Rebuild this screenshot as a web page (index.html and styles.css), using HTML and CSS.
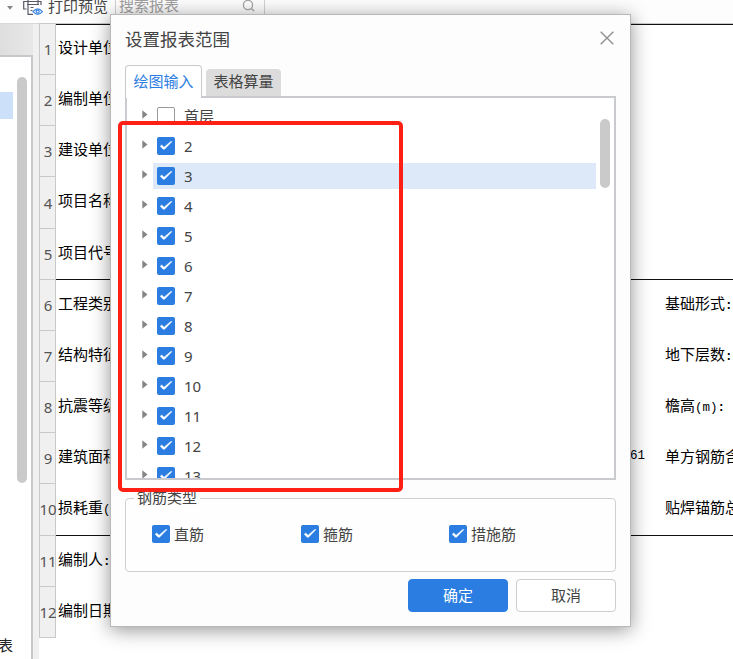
FILE: index.html
```html
<!DOCTYPE html>
<html lang="zh-CN">
<head>
<meta charset="utf-8">
<title>设置报表范围</title>
<link rel="stylesheet" href="styles.css">
</head>
<body>
<svg class="defs" aria-hidden="true">
  <symbol id="check" viewBox="0 0 18 18"><rect width="18" height="18" rx="2" fill="#2b7de1"/><path d="M3.200 9.300 6.200 12.200 7.500 12.200 15 4.500 13.500 4.700 7.100 10.200 4.700 8z" fill="#fff" stroke="#fff" stroke-width=".5"/></symbol>
  <symbol id="arrow" viewBox="0 0 6 9"><path d="M.3.2 5.5 4.5.3 8.8z" fill="#858585"/></symbol>
</svg>
<div class="app">
  <header class="toolbar">
    <svg class="caret" viewBox="0 0 6 4"><path d="M0 0h6L3 3.7z" fill="#858585"/></svg>
    <svg class="printer" viewBox="0 0 20 20" fill="none" stroke="#565b66" stroke-width="1.200"><path d="M5 7V0M15 0v7M3.500 12H.700V4.500H18V8M4 7.500h12M5 7.500V17.300h5M7.500 10.500h3M7.500 13.500h2"/><path d="M10 14.700q4.700-5.600 9.400 0-4.700 5.300-9.400 0z" stroke="#3b87e2" fill="#fff"/><circle cx="14.700" cy="14.600" r="1.500" stroke="#3b87e2"/></svg>
    <span class="preview">打印预览</span>
    <div class="search"><span>搜索报表</span><svg viewBox="0 0 14 14" fill="none" stroke="#a4a4a4" stroke-width="1.300"><circle cx="6" cy="6" r="4.600"/><path d="m9.500 9.500 2.700 2.700"/></svg></div>
  </header>
  <main class="workspace">
    <aside class="side">
      <div class="side-head"></div>
      <div class="side-body"><div class="side-list"><div class="side-selected"></div><span>表</span></div><div class="side-scroll"></div></div>
    </aside>
    <section class="sheet">
      <div class="row"><b>1</b><p>设计单位</p><p></p></div>
      <div class="row"><b>2</b><p>编制单位</p><p></p></div>
      <div class="row"><b>3</b><p>建设单位</p><p></p></div>
      <div class="row"><b>4</b><p>项目名称</p><p></p></div>
      <div class="row"><b>5</b><p>项目代号</p><p></p></div>
      <div class="row ruled"><b>6</b><p>工程类别</p><p>基础形式<i class="colon">:</i></p></div>
      <div class="row"><b>7</b><p>结构特征</p><p>地下层数<i class="colon">:</i></p></div>
      <div class="row"><b>8</b><p>抗震等级</p><p>檐高<i>(m)</i><i class="colon">:</i></p></div>
      <div class="row"><b>9</b><p>建筑面积<i class="area">61</i></p><p>单方钢筋含量</p></div>
      <div class="row"><b>10</b><p>损耗重<i>(</i></p><p>贴焊锚筋总重</p></div>
      <div class="row ruled"><b>11</b><p>编制人<i class="colon">:</i></p><p></p></div>
      <div class="row"><b>12</b><p>编制日期</p><p></p></div>
    </section>
  </main>
</div>

<div class="dialog" role="dialog">
  <div class="dialog-head"><h1>设置报表范围</h1><svg class="close" viewBox="0 0 14 14"><path d="m.7.700 12.600 12.600M13.300.700.700 13.300" stroke="#909090" stroke-width="1.400"/></svg></div>
  <div class="tabs"><div class="tab active">绘图输入</div><div class="tab">表格算量</div></div>
  <div class="tree">
    <div class="items">
      <div class="item"><svg class="arrow"><use href="#arrow"/></svg><div class="node"><span class="empty"></span>首层</div></div>
      <div class="item"><svg class="arrow"><use href="#arrow"/></svg><div class="node"><svg class="check"><use href="#check"/></svg>2</div></div>
      <div class="item"><svg class="arrow"><use href="#arrow"/></svg><div class="node selected"><svg class="check"><use href="#check"/></svg>3</div></div>
      <div class="item"><svg class="arrow"><use href="#arrow"/></svg><div class="node"><svg class="check"><use href="#check"/></svg>4</div></div>
      <div class="item"><svg class="arrow"><use href="#arrow"/></svg><div class="node"><svg class="check"><use href="#check"/></svg>5</div></div>
      <div class="item"><svg class="arrow"><use href="#arrow"/></svg><div class="node"><svg class="check"><use href="#check"/></svg>6</div></div>
      <div class="item"><svg class="arrow"><use href="#arrow"/></svg><div class="node"><svg class="check"><use href="#check"/></svg>7</div></div>
      <div class="item"><svg class="arrow"><use href="#arrow"/></svg><div class="node"><svg class="check"><use href="#check"/></svg>8</div></div>
      <div class="item"><svg class="arrow"><use href="#arrow"/></svg><div class="node"><svg class="check"><use href="#check"/></svg>9</div></div>
      <div class="item"><svg class="arrow"><use href="#arrow"/></svg><div class="node"><svg class="check"><use href="#check"/></svg>10</div></div>
      <div class="item"><svg class="arrow"><use href="#arrow"/></svg><div class="node"><svg class="check"><use href="#check"/></svg>11</div></div>
      <div class="item"><svg class="arrow"><use href="#arrow"/></svg><div class="node"><svg class="check"><use href="#check"/></svg>12</div></div>
      <div class="item"><svg class="arrow"><use href="#arrow"/></svg><div class="node"><svg class="check"><use href="#check"/></svg>13</div></div>
    </div>
    <div class="tree-scroll"></div>
  </div>
  <div class="group">
    <span class="legend">钢筋类型</span>
    <label><svg class="check"><use href="#check"/></svg>直筋</label>
    <label><svg class="check"><use href="#check"/></svg>箍筋</label>
    <label><svg class="check"><use href="#check"/></svg>措施筋</label>
  </div>
  <div class="actions"><button class="primary">确定</button><button>取消</button></div>
</div>
<div class="highlight"></div>
</body>
</html>
```
FILE: styles.css
```css
* { box-sizing: border-box; }
body {
  margin: 0;
  width: 733px;
  height: 659px;
  overflow: hidden;
  position: relative;
  background: #fff;
  color: #444;
  font: 15px/20px "Noto Sans", "Noto Sans CJK SC", sans-serif;
}
svg { display: block; flex: none; }
.defs { position: absolute; width: 0; height: 0; }

.app { height: 659px; display: flex; flex-direction: column; }
.toolbar { height: 23px; display: flex; align-items: flex-start; background: #fdfdfd; overflow: hidden; flex: none; }
.caret { width: 6px; height: 4px; margin: 6px 10px 0 7px; }
.printer { width: 20px; height: 20px; margin-top: -3px; }
.preview { margin: -4px 0 0 5px; width: 60px; }
.search { display: flex; width: 150px; height: 16px; margin-left: 7px; border: solid #d0d0d0; border-width: 0 1px; padding: 0 8px 0 3px; justify-content: space-between; color: #a0a0a0; }
.search span { margin-top: -5px; }
.search svg { width: 14px; height: 14px; margin-top: -1px; }

.workspace { display: flex; flex: 1; min-height: 0; }
.side { width: 39px; background: #f0f0f0; flex: none; border-top: 1px solid #d8d8d8; }
.side-head { height: 31px; width: 33px; background: linear-gradient(90deg, #dedede, #e8e8e8); }
.side-body { width: 33px; height: 604px; background: #fff; border: solid #c6c8cc; border-width: 2px 2px 0 0; display: flex; gap: 4px; }
.side-list { width: 13px; padding-top: 35px; display: flex; flex-direction: column; }
.side-selected { height: 27px; background: #cce0fa; margin-bottom: 516px; flex: none; }
.side-list span { margin-left: -2px; color: #222; }
.side-scroll { width: 10px; height: 406px; margin-top: 20px; border-radius: 5px; background: #cacaca; }

.sheet { flex: 1; border-top: 1px solid #c9c9c9; }
.row { height: 51.17px; display: grid; grid-template-columns: 17px 609px 1fr; color: #000; white-space: nowrap; overflow: hidden; }
.row b { border: solid #c9c9c9; border-width: 0 1px 1px; background: #f0f0f0; color: #555; font-weight: 400; display: flex; justify-content: center; align-items: center; padding-left: 1px; }
.row p { margin: 0; padding: 13px 0 0 2px; position: relative; }
.row p:last-child { padding-left: 0; }
.row:first-child p { box-shadow: inset 0 1px #111; }
.row.ruled { overflow: visible; }
.row.ruled p { box-shadow: 0 -1px #111; }
.row i { font: 12.5px/20px "Liberation Mono", monospace; }
.row .colon { font-weight: 700; }
.area { position: absolute; left: 574px; }

.dialog {
  position: absolute;
  left: 110px;
  top: 14px;
  width: 521px;
  height: 613px;
  background: #fdfdfd;
  border: 1px solid #b8b8b8;
  box-shadow: 0 3px 18px rgba(0,0,0,.42);
  padding: 0 14px;
  display: flex;
  flex-direction: column;
}
.dialog-head { height: 50px; display: flex; justify-content: space-between; padding-top: 12px; flex: none; }
h1 { margin: 0; font-size: 17.5px; line-height: 24px; font-weight: 400; }
.close { width: 14px; height: 14px; margin: 4px 2px 0 0; }
.tabs { height: 31px; display: flex; align-items: flex-end; gap: 4px; flex: none; }
.tab { height: 27px; width: 75px; border-radius: 4px 4px 0 0; background: #dcdcdc; text-align: center; line-height: 25px; }
.tab.active { height: 33px; width: 77px; margin-bottom: -2px; background: #fff; color: #2b7de1; border: 1px solid #c6c9cd; border-bottom: 0; line-height: 30px; position: relative; z-index: 1; }
.tree { height: 384px; border: 2px solid #c8cacd; background: #fff; display: flex; overflow: hidden; flex: none; padding: 2.5px 4px 0 15px; }
.items { width: 454px; }
.item { height: 30px; display: flex; align-items: center; }
.arrow { width: 6px; height: 9px; margin: 0 5px 2px 0; }
.node { width: 443px; height: 26px; display: flex; align-items: center; padding-left: 4px; gap: 9px; }
.selected { background: #dde9f9; }
.check { width: 18px; height: 18px; }
.empty { width: 18px; height: 18px; border: 1px solid #999; border-radius: 2px; }
.tree-scroll { width: 10px; height: 69px; border-radius: 5px; background: #cacaca; margin: 18px 0 0 4px; }

.group { position: relative; height: 74px; margin-top: 18px; border: 1px solid #d0d0d0; border-radius: 4px; background: #fefefe; display: grid; grid-template-columns: 149px 148px 1fr; padding: 25px 0 0 26px; flex: none; }
.legend { position: absolute; left: 8px; top: -12px; padding: 0 3px; background: #fdfdfd; }
.group label { display: flex; gap: 4px; height: 20px; align-items: center; }
.actions { display: flex; justify-content: flex-end; gap: 8px; margin-top: 7px; }
button { width: 100px; height: 33px; border: 1px solid #cdcdcd; border-radius: 4px; background: #fff; color: #444; font: inherit; padding: 0 0 2px; }
button.primary { background: #2b7de1; border-color: #2b7de1; color: #fff; }
.highlight { position: absolute; left: 118px; top: 121px; width: 284.5px; height: 370.5px; border: 4px solid #ff2015; border-radius: 5px; }
```
